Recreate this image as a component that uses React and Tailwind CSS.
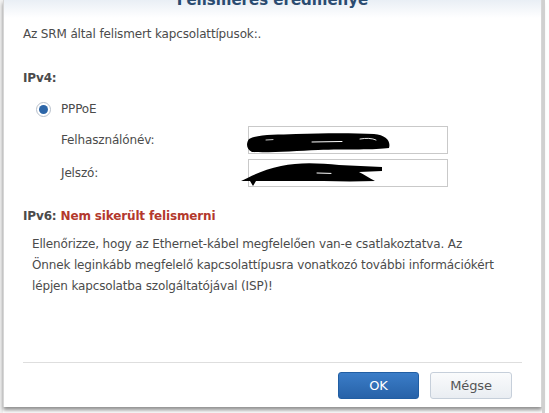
import React from 'react';

const font = { fontFamily: '"DejaVu Sans", Verdana, sans-serif', letterSpacing: '-0.15px' };

function Scribble({ variant }) {
  if (variant === 1) {
    return (
      <svg width="146" height="23" viewBox="0 0 146 23" className="absolute left-[-3px] top-[4px]">
        <path d="M3 8 C12 3, 30 4, 50 3 C80 2, 108 2, 128 3 C140 4, 145 10, 143 17 C130 19, 100 18, 72 19 C50 20, 22 22, 6 21 C0 18, 0 12, 3 8 Z" fill="#000" />
        <path d="M66 11 L96 10.5" stroke="#fff" strokeWidth="1" strokeLinecap="round" />
        <path d="M114 8 C120 7, 126 7, 130 9" stroke="#fff" strokeWidth="0.9" fill="none" strokeLinecap="round" />
        <path d="M20 9 L27 8.6" stroke="#fff" strokeWidth="0.8" strokeLinecap="round" />
      </svg>
    );
  }
  return (
    <svg width="142" height="26" viewBox="0 0 142 26" className="absolute left-[-8px] top-[0px]">
      <path d="M0 21 C10 16, 24 9, 40 6 C58 2, 78 3, 98 5 L141 7 L141 11 L118 12 C124 15, 128 18, 134 21 C110 22, 82 21, 56 21 C40 21, 26 21, 15 21 L12 26 L9 21 Z" fill="#000" />
      <path d="M76 13 L90 13.4" stroke="#fff" strokeWidth="1" strokeLinecap="round" />
    </svg>
  );
}

function Field({ label, variant }) {
  return (
    <div className="flex items-center h-[28px]">
      <span className="w-[187px] text-[12px] text-[#4b4b4b]">{label}</span>
      <div className="relative w-[200px] h-[28px] border border-[#c9c9c9] bg-white">
        <Scribble variant={variant} />
      </div>
    </div>
  );
}

export default function App() {
  return (
    <div className="w-[549px] h-[413px] overflow-hidden bg-white flex" style={font}>
      <div className="w-[3px] h-full bg-[#f2f2f2]" />
      <div className="w-[539px] h-[407px] bg-white flex flex-col shadow-[0_3px_4px_rgba(0,0,0,0.45)] border-x border-[#d6d6d6]">
        <div className="h-[30px] -mt-[12px] bg-gradient-to-b from-[#dbe4ef] to-white text-center">
          <span className="text-[15px] font-bold text-[#2a4b70] leading-[18px] tracking-normal">Felismerés eredménye</span>
        </div>
        <div className="px-[19px] pt-[7px] text-[12px] text-[#4b4b4b]">
          <p className="leading-[18px]">Az SRM által felismert kapcsolattípusok:.</p>
          <p className="mt-[26px] font-bold leading-[18px]">IPv4:</p>
          <div className="mt-[13px] pl-[13px]">
            <div className="flex items-center h-[18px]">
              <span className="w-[15px] h-[15px] rounded-full border border-[#b7bfca] bg-white flex items-center justify-center">
                <span className="w-[9px] h-[9px] rounded-full bg-[#2d66a8]" />
              </span>
              <span className="ml-[10px]">PPPoE</span>
            </div>
            <div className="mt-[8px] pl-[25px] flex flex-col gap-[5px]">
              <Field label="Felhasználónév:" variant={1} />
              <Field label="Jelszó:" variant={2} />
            </div>
          </div>
          <p className="mt-[20px] font-bold leading-[18px]">
            IPv6: <span className="text-[#b3392d]">Nem sikerült felismerni</span>
          </p>
          <p className="mt-[9px] pl-[9px] leading-[21px] whitespace-nowrap">
            Ellenőrizze, hogy az Ethernet-kábel megfelelően van-e csatlakoztatva. Az
            <br />
            Önnek leginkább megfelelő kapcsolattípusra vonatkozó további információkért
            <br />
            lépjen kapcsolatba szolgáltatójával (ISP)!
          </p>
        </div>
        <div className="mt-auto mx-[19px] border-t border-[#dedede]" />
        <div className="flex justify-end gap-[11px] pr-[29px] pt-[9px] pb-[8px]">
          <button className="w-[81px] h-[27px] rounded-[3px] border border-[#215ea3] bg-gradient-to-b from-[#3b7dc8] to-[#2762a8] text-white text-[13px]">OK</button>
          <button className="w-[82px] h-[27px] rounded-[3px] border border-[#c6cfda] bg-gradient-to-b from-[#fafbfc] to-[#e9edf2] text-[#555] text-[13px]">Mégse</button>
        </div>
      </div>
      <div className="flex-1 h-full flex">
        <div className="w-[3px] h-full bg-[#d0d0d0]" />
      </div>
    </div>
  );
}
